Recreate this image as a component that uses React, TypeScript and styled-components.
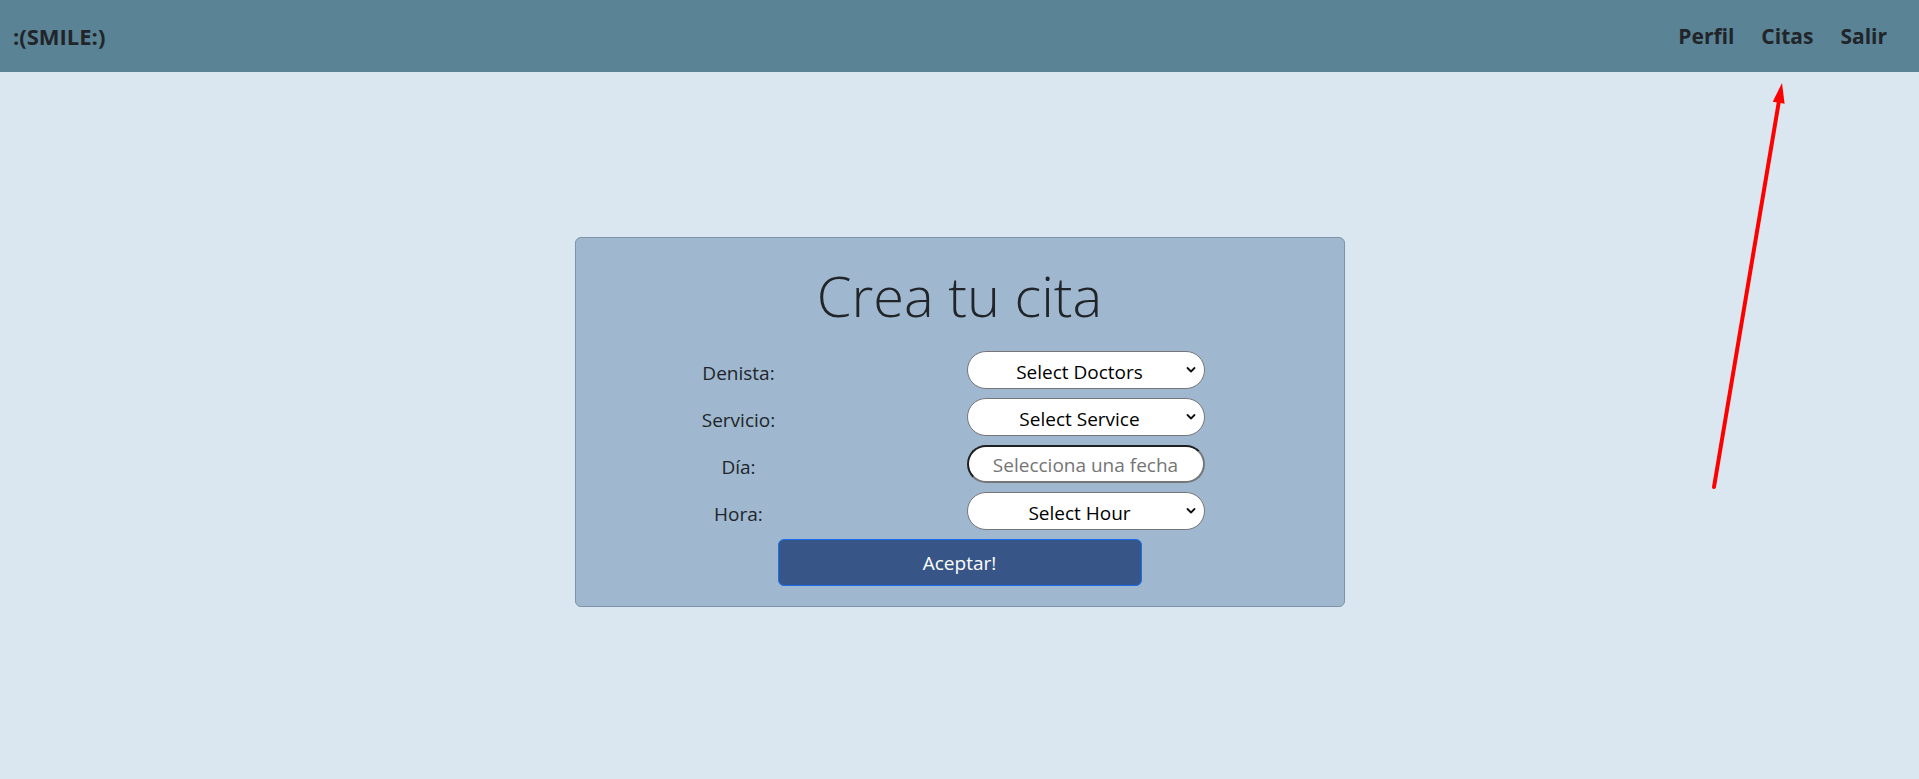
import React from "react";
import styled, { createGlobalStyle } from "styled-components";

const Global = createGlobalStyle`
  html, body { margin: 0; padding: 0; }
  body {
    background: #dbe7f0;
    font-family: "Open Sans", "Noto Sans", Arial, sans-serif;
    color: #212529;
  }
  * { box-sizing: border-box; }
`;

const Page = styled.div`
  position: relative;
  min-height: 779px;
  background: #dbe7f0;
`;

const Header = styled.header`
  height: 72px;
  background: #5a8396;
  display: flex;
  align-items: center;
  justify-content: space-between;
  padding: 0 32px 0 13px;
`;

const Brand = styled.a`
  font-size: 22px;
  font-weight: 700;
  color: #212529;
  text-decoration: none;
`;

const Nav = styled.nav`
  display: flex;
  gap: 27px;
`;

const NavLink = styled.a`
  font-size: 21px;
  font-weight: 700;
  color: #212529;
  text-decoration: none;
`;

const Main = styled.main`
  display: flex;
  justify-content: center;
  padding-top: 165px;
`;

const Card = styled.section`
  width: 770px;
  background: #9fb8cf;
  border: 1px solid #7d93a8;
  border-radius: 6px;
  padding: 24px 0 20px;
  display: flex;
  flex-direction: column;
`;

const Title = styled.h1`
  margin: 0 0 22px;
  text-align: center;
  font-size: 56px;
  font-weight: 300;
  line-height: 1.2;
  color: #212529;
`;

const Form = styled.div`
  display: grid;
  grid-template-columns: 130px 238px;
  grid-auto-rows: 38px;
  column-gap: 163px;
  row-gap: 9px;
  margin-left: 98px;
`;

const Label = styled.label`
  text-align: center;
  font-size: 19px;
  line-height: 30px;
  padding-top: 7px;
  color: #212529;
`;

const FieldWrap = styled.div`
  position: relative;
  height: 38px;
`;

const Select = styled.select`
  appearance: none;
  -webkit-appearance: none;
  width: 100%;
  height: 38px;
  border: 1px solid #767676;
  border-radius: 19px;
  background: #ffffff;
  font-family: "Open Sans", "Noto Sans", Arial, sans-serif;
  font-size: 19px;
  color: #000;
  text-align: center;
  text-align-last: center;
  padding: 3px 20px 0 8px;
  outline: none;
`;

const Chevron = styled.svg`
  position: absolute;
  right: 9px;
  top: 15px;
  width: 10px;
  height: 8px;
  pointer-events: none;
`;

const DateInput = styled.input`
  width: 100%;
  height: 38px;
  border-width: 2px;
  border-style: solid;
  border-color: #1f1f1f #767676 #767676 #1f1f1f;
  border-radius: 19px;
  background: #ffffff;
  font-family: "Open Sans", "Noto Sans", Arial, sans-serif;
  font-size: 19px;
  text-align: center;
  padding: 2px 8px 0;
  outline: none;
  &::placeholder { color: #757575; }
`;

const Submit = styled.button`
  align-self: center;
  margin-top: 9px;
  width: 364px;
  height: 47px;
  background: #375687;
  border: 1px solid #1a6ef0;
  border-radius: 6px;
  color: #ffffff;
  font-family: "Open Sans", "Noto Sans", Arial, sans-serif;
  font-size: 19px;
  cursor: pointer;
`;

const ArrowOverlay = styled.svg`
  position: absolute;
  left: 0;
  top: 0;
  pointer-events: none;
`;

const ChevronIcon = () => (
  <Chevron viewBox="0 0 10 8">
    <path d="M1.5 2 L5 5.5 L8.5 2" fill="none" stroke="#111" strokeWidth="1.8" strokeLinecap="round" strokeLinejoin="round" />
  </Chevron>
);

const SelectField: React.FC<{ label: string; id: string }> = ({ label, id }) => (
  <FieldWrap>
    <Select id={id} defaultValue="">
      <option value="">{label}</option>
    </Select>
    <ChevronIcon />
  </FieldWrap>
);

export default function App() {
  const x1 = 1714, y1 = 487, x2 = 1782, y2 = 83;
  const dx = x2 - x1, dy = y2 - y1;
  const len = Math.sqrt(dx * dx + dy * dy);
  const ux = dx / len, uy = dy / len;
  const head = 20, half = 6;
  const bx = x2 - ux * head, by = y2 - uy * head;
  const px = -uy, py = ux;
  const headPts = `${x2},${y2} ${bx + px * half},${by + py * half} ${bx - px * half},${by - py * half}`;

  return (
    <Page>
      <Global />
      <Header>
        <Brand href="#">:(SMILE:)</Brand>
        <Nav>
          <NavLink href="#">Perfil</NavLink>
          <NavLink href="#">Citas</NavLink>
          <NavLink href="#">Salir</NavLink>
        </Nav>
      </Header>
      <Main>
        <Card>
          <Title>Crea tu cita</Title>
          <Form>
            <Label htmlFor="doc">Denista:</Label>
            <SelectField id="doc" label="Select Doctors" />
            <Label htmlFor="srv">Servicio:</Label>
            <SelectField id="srv" label="Select Service" />
            <Label htmlFor="day">Día:</Label>
            <FieldWrap>
              <DateInput id="day" placeholder="Selecciona una fecha" />
            </FieldWrap>
            <Label htmlFor="hr">Hora:</Label>
            <SelectField id="hr" label="Select Hour" />
          </Form>
          <Submit type="button">Aceptar!</Submit>
        </Card>
      </Main>
      <ArrowOverlay width="1919" height="779">
        <line x1={x1} y1={y1} x2={bx} y2={by} stroke="#ff0000" strokeWidth="4" strokeLinecap="round" />
        <polygon points={headPts} fill="#ff0000" />
      </ArrowOverlay>
    </Page>
  );
}
